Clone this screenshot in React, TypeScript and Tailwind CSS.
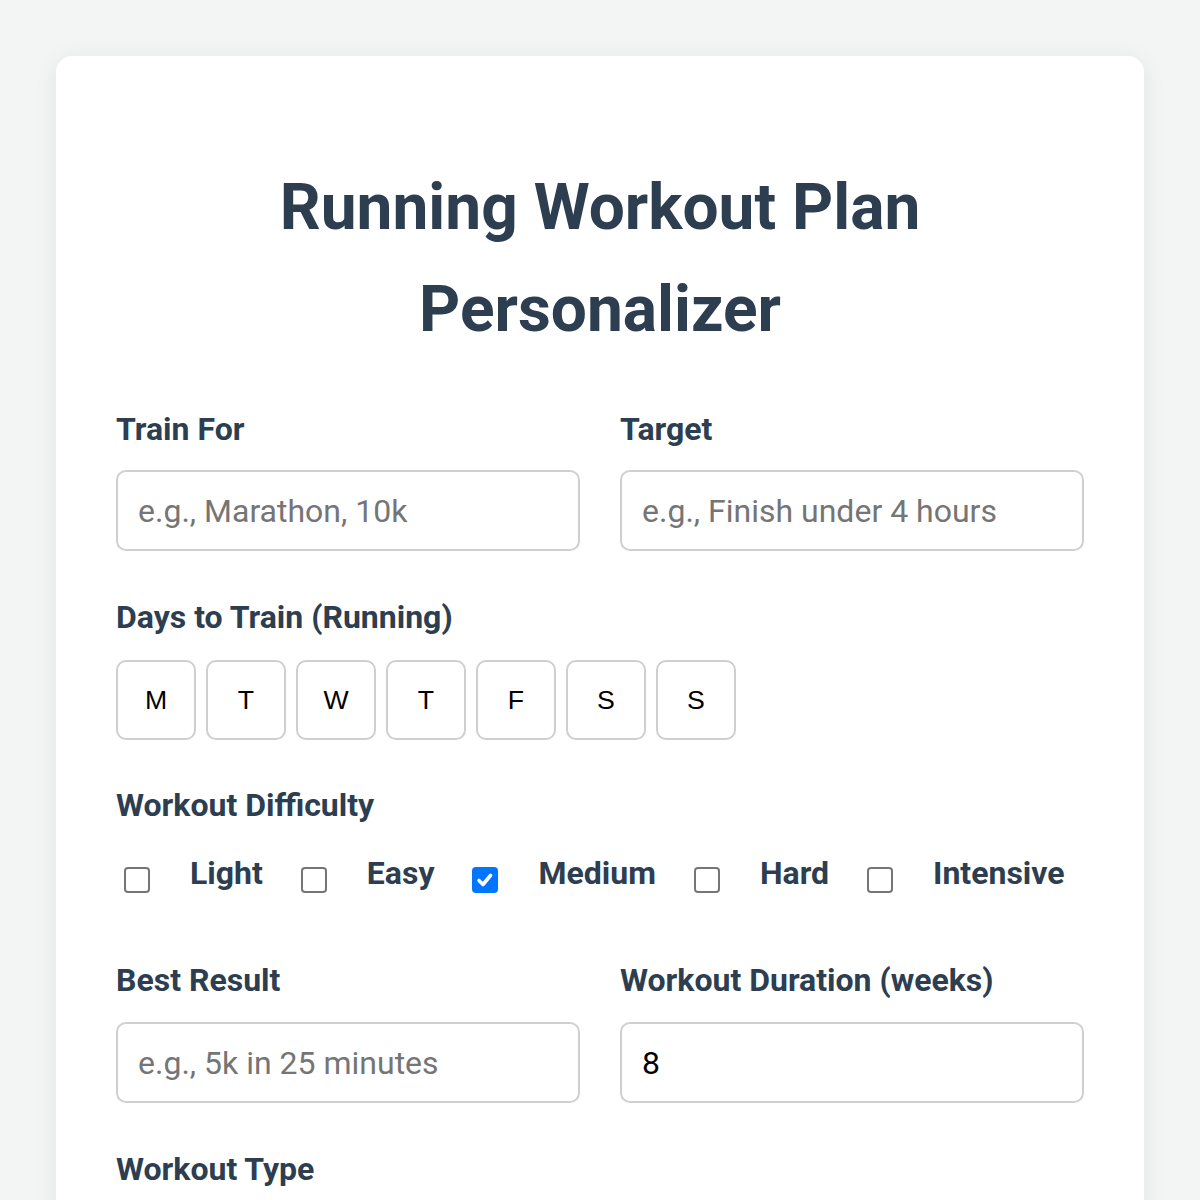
import React from "react";

const labelCls = "block text-[32px] font-bold leading-[48px] text-[#2c3e50]";
const inputCls =
  "w-full h-[81px] rounded-[10px] border-2 border-[#cfcfcf] bg-white px-[20px] text-[32px] text-black placeholder:text-[#757575] outline-none";

function Check({ checked }: { checked?: boolean }) {
  return checked ? (
    <span className="ml-[8px] mt-[18px] flex h-[26px] w-[26px] shrink-0 items-center justify-center rounded-[4px] bg-[#0075ff]">
      <svg width="20" height="20" viewBox="0 0 20 20">
        <path d="M4 10.5 L8 14.5 L15.5 5.5" fill="none" stroke="white" strokeWidth="3.6" strokeLinecap="round" strokeLinejoin="round" />
      </svg>
    </span>
  ) : (
    <span className="ml-[8px] mt-[18px] block h-[26px] w-[26px] shrink-0 rounded-[4px] border-2 border-[#767676] bg-white" />
  );
}

export default function App() {
  const days = ["M", "T", "W", "T", "F", "S", "S"];
  const levels = [
    { name: "Light", checked: false },
    { name: "Easy", checked: false },
    { name: "Medium", checked: true },
    { name: "Hard", checked: false },
    { name: "Intensive", checked: false },
  ];
  return (
    <div
      className="min-h-[1200px] bg-[#f3f4f4] px-[56px] pt-[56px]"
      style={{ fontFamily: "Roboto, 'Noto Sans', sans-serif" }}
    >
      <div className="rounded-[16px] bg-white px-[60px] pt-[101px] pb-[60px] shadow-[0_4px_24px_rgba(0,0,0,0.07)]">
        <h1 className="text-center text-[64px] font-bold leading-[102px] text-[#2c3e50]">
          Running Workout Plan
          <br />
          Personalizer
        </h1>

        <div className="mt-[44px] grid grid-cols-2 gap-x-[40px]">
          <div>
            <label className={labelCls}>Train For</label>
            <input className={`${inputCls} mt-[17px]`} placeholder="e.g., Marathon, 10k" />
          </div>
          <div>
            <label className={labelCls}>Target</label>
            <input className={`${inputCls} mt-[17px]`} placeholder="e.g., Finish under 4 hours" />
          </div>
        </div>

        <div className="mt-[42px]">
          <label className={labelCls}>Days to Train (Running)</label>
          <div className="mt-[19px] flex gap-[10px]">
            {days.map((d, i) => (
              <button
                key={i}
                className="flex h-[80px] w-[80px] items-center justify-center rounded-[10px] border-2 border-[#cfcfcf] bg-white text-[26.67px] text-black"
                style={{ fontFamily: "'Liberation Sans', Arial, sans-serif" }}
              >
                {d}
              </button>
            ))}
          </div>
        </div>

        <div className="mt-[41px]">
          <label className={labelCls}>Workout Difficulty</label>
          <div className="mt-[20px] flex items-start">
            {levels.map((l, i) => (
              <div key={l.name} className={`flex items-start ${i > 0 ? "ml-[30px]" : ""}`}>
                <Check checked={l.checked} />
                <span className="ml-[40px] text-[32px] font-bold leading-[48px] text-[#2c3e50]">{l.name}</span>
              </div>
            ))}
          </div>
        </div>

        <div className="mt-[59px] grid grid-cols-2 gap-x-[40px]">
          <div>
            <label className={labelCls}>Best Result</label>
            <input className={`${inputCls} mt-[18px]`} placeholder="e.g., 5k in 25 minutes" />
          </div>
          <div>
            <label className={labelCls}>Workout Duration (weeks)</label>
            <input className={`${inputCls} mt-[18px]`} defaultValue="8" />
          </div>
        </div>

        <div className="mt-[42px]">
          <label className={labelCls}>Workout Type</label>
        </div>
      </div>
    </div>
  );
}
